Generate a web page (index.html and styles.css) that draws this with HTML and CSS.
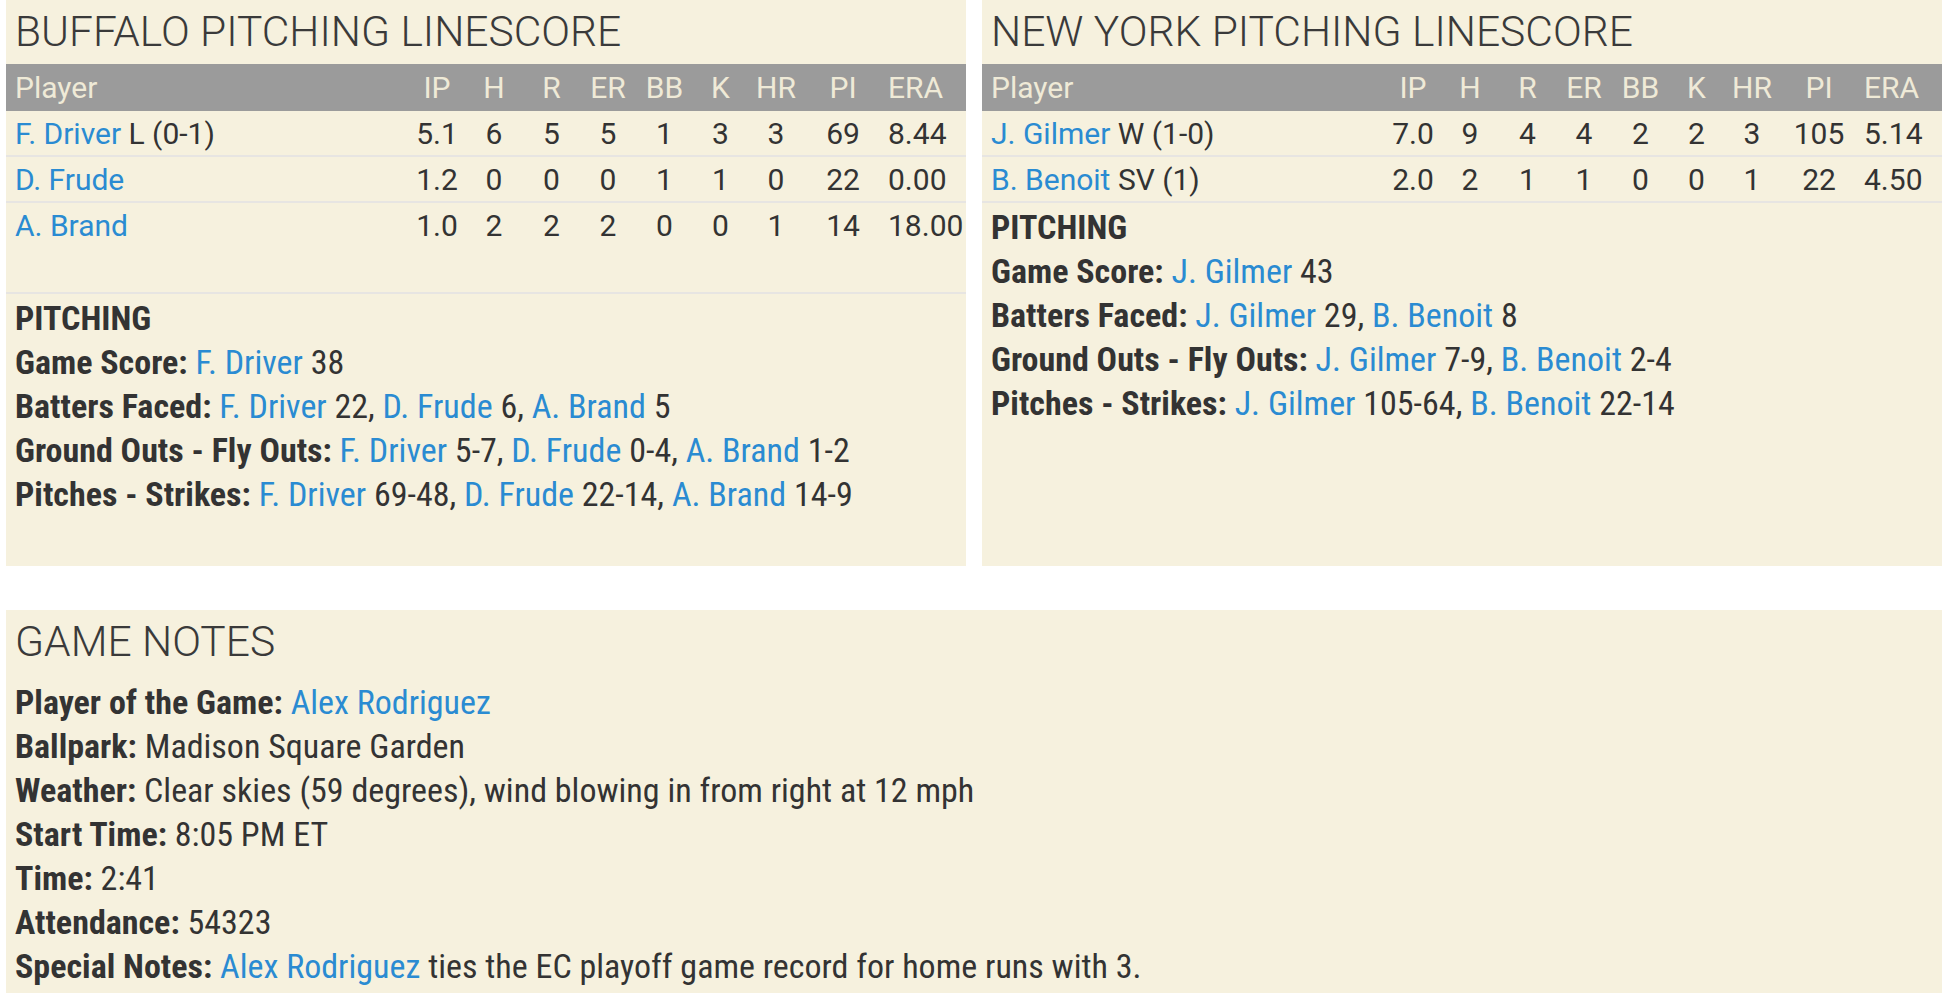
FILE: index.html
```html
<!DOCTYPE html>
<html lang="en">

<head>
    <meta charset="UTF-8">
    <title>Box Score - Pitching</title>
    <link rel="stylesheet" href="styles.css">
</head>

<body>
    <div id="linescores">

        <div class="panel">
            <h2 class="panel-title">BUFFALO PITCHING LINESCORE</h2>
            <table class="linescore">
                <colgroup>
                    <col class="c-player"><col class="c-ip"><col class="c-h"><col class="c-r"><col class="c-er">
                    <col class="c-bb"><col class="c-k"><col class="c-hr"><col class="c-pi"><col class="c-era">
                </colgroup>
                <thead>
                    <tr>
                        <th class="player">Player</th>
                        <th>IP</th><th>H</th><th>R</th><th>ER</th><th>BB</th><th>K</th><th>HR</th><th>PI</th>
                        <th class="era">ERA</th>
                    </tr>
                </thead>
                <tbody>
                    <tr>
                        <td class="player"><a href="#">F. Driver</a> L (0-1)</td>
                        <td>5.1</td><td>6</td><td>5</td><td>5</td><td>1</td><td>3</td><td>3</td><td>69</td>
                        <td class="era">8.44</td>
                    </tr>
                    <tr>
                        <td class="player"><a href="#">D. Frude</a></td>
                        <td>1.2</td><td>0</td><td>0</td><td>0</td><td>1</td><td>1</td><td>0</td><td>22</td>
                        <td class="era">0.00</td>
                    </tr>
                    <tr>
                        <td class="player"><a href="#">A. Brand</a></td>
                        <td>1.0</td><td>2</td><td>2</td><td>2</td><td>0</td><td>0</td><td>1</td><td>14</td>
                        <td class="era">18.00</td>
                    </tr>
                    <tr class="filler">
                        <td colspan="10"></td>
                    </tr>
                </tbody>
            </table>

            <div class="pitching">
                <b class="section-title">PITCHING</b>
                <p><b>Game Score:</b> <a href="#">F. Driver</a> 38</p>
                <p><b>Batters Faced:</b> <a href="#">F. Driver</a> 22, <a href="#">D. Frude</a> 6, <a href="#">A. Brand</a> 5</p>
                <p><b>Ground Outs - Fly Outs:</b> <a href="#">F. Driver</a> 5-7, <a href="#">D. Frude</a> 0-4, <a href="#">A. Brand</a> 1-2</p>
                <p><b>Pitches - Strikes:</b> <a href="#">F. Driver</a> 69-48, <a href="#">D. Frude</a> 22-14, <a href="#">A. Brand</a> 14-9</p>
            </div>
        </div>

        <div class="panel">
            <h2 class="panel-title">NEW YORK PITCHING LINESCORE</h2>
            <table class="linescore">
                <colgroup>
                    <col class="c-player"><col class="c-ip"><col class="c-h"><col class="c-r"><col class="c-er">
                    <col class="c-bb"><col class="c-k"><col class="c-hr"><col class="c-pi"><col class="c-era">
                </colgroup>
                <thead>
                    <tr>
                        <th class="player">Player</th>
                        <th>IP</th><th>H</th><th>R</th><th>ER</th><th>BB</th><th>K</th><th>HR</th><th>PI</th>
                        <th class="era">ERA</th>
                    </tr>
                </thead>
                <tbody>
                    <tr>
                        <td class="player"><a href="#">J. Gilmer</a> W (1-0)</td>
                        <td>7.0</td><td>9</td><td>4</td><td>4</td><td>2</td><td>2</td><td>3</td><td>105</td>
                        <td class="era">5.14</td>
                    </tr>
                    <tr>
                        <td class="player"><a href="#">B. Benoit</a> SV (1)</td>
                        <td>2.0</td><td>2</td><td>1</td><td>1</td><td>0</td><td>0</td><td>1</td><td>22</td>
                        <td class="era">4.50</td>
                    </tr>
                </tbody>
            </table>

            <div class="pitching">
                <b class="section-title">PITCHING</b>
                <p><b>Game Score:</b> <a href="#">J. Gilmer</a> 43</p>
                <p><b>Batters Faced:</b> <a href="#">J. Gilmer</a> 29, <a href="#">B. Benoit</a> 8</p>
                <p><b>Ground Outs - Fly Outs:</b> <a href="#">J. Gilmer</a> 7-9, <a href="#">B. Benoit</a> 2-4</p>
                <p><b>Pitches - Strikes:</b> <a href="#">J. Gilmer</a> 105-64, <a href="#">B. Benoit</a> 22-14</p>
            </div>
        </div>

    </div>

    <div class="panel" id="notes">
        <h2 class="panel-title">GAME NOTES</h2>
        <div class="notes-content">
            <p><b>Player of the Game:</b> <a href="#">Alex Rodriguez</a></p>
            <p><b>Ballpark:</b> Madison Square Garden</p>
            <p><b>Weather:</b> Clear skies (59 degrees), wind blowing in from right at 12 mph</p>
            <p><b>Start Time:</b> 8:05 PM ET</p>
            <p><b>Time:</b> 2:41</p>
            <p><b>Attendance:</b> 54323</p>
            <p><b>Special Notes:</b> <a href="#">Alex Rodriguez</a> ties the EC playoff game record for home runs with 3.</p>
        </div>
    </div>
</body>

</html>
```

FILE: styles.css
```css
html,
body {
    margin: 0;
    background-color: #fff;
}

body {
    padding: 0 8px 0 6px;
    font-family: Roboto, "Liberation Sans", sans-serif;
    color: #333;
}

a {
    color: #2a8bd2;
    text-decoration: none;
}

#linescores {
    display: grid;
    grid-template-columns: 1fr 1fr;
    column-gap: 16px;
}

.panel {
    background-color: #f6f1de;
}

.panel-title {
    margin: 0;
    padding: 0 9px;
    height: 64px;
    line-height: 64px;
    font-size: 42.5px;
    font-weight: 300;
    color: #3a3a3a;
    white-space: nowrap;
}

/* stats table */
.linescore {
    width: 100%;
    border-collapse: collapse;
    table-layout: fixed;
    font-size: 30px;
}

.linescore .c-player { width: 403px; }
.linescore .c-ip { width: 56px; }
.linescore .c-h { width: 58px; }
.linescore .c-r { width: 57px; }
.linescore .c-er { width: 56px; }
.linescore .c-bb { width: 57px; }
.linescore .c-k { width: 55px; }
.linescore .c-hr { width: 56px; }
.linescore .c-pi { width: 78px; }
.linescore .c-era { width: 84px; }

.linescore th {
    height: 47px;
    padding: 0;
    background-color: #9b9b9b;
    color: #efead7;
    font-weight: 400;
    text-align: center;
}

.linescore td {
    height: 44px;
    padding: 0;
    text-align: center;
    white-space: nowrap;
}

.linescore tbody tr + tr td {
    border-top: 2px solid #e7e5e2;
}

.linescore .player {
    text-align: left;
    padding-left: 9px;
}

.linescore .era {
    text-align: left;
    padding-left: 6px;
}

.linescore tr.filler td {
    height: 45px;
    border-top: none;
}

/* pitching / notes text */
.pitching,
.notes-content {
    font-family: "Roboto Condensed", "Liberation Sans Narrow", Roboto, sans-serif;
    font-stretch: condensed;
    font-size: 34px;
    line-height: 44px;
    color: #333;
}

.pitching {
    border-top: 2px solid #e7e5e2;
    padding: 2px 9px 50px;
}

.pitching p,
.notes-content p {
    margin: 0;
    white-space: nowrap;
}

.section-title {
    display: block;
}

#notes {
    margin-top: 44px;
}

.notes-content {
    padding: 6px 9px 5px;
}
```
